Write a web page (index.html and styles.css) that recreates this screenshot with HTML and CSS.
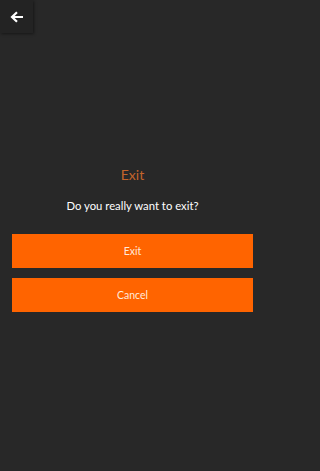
FILE: index.html
```html
<!DOCTYPE html>
<html>
<head>
<meta charset="utf-8">
<link rel="stylesheet" href="styles.css">
</head>
<body>
<div class="page">
  <div class="topbar">
    <button class="back" aria-label="Back">
      <svg width="14" height="12" viewBox="0 0 14 12"><path d="M13 6H2.5M7 1.2L2 6l5 4.8" fill="none" stroke="#fff" stroke-width="2.2"/></svg>
    </button>
  </div>
  <div class="dialog">
    <div class="title">Exit</div>
    <div class="question">Do you really want to exit?</div>
    <button class="btn">Exit</button>
    <button class="btn">Cancel</button>
  </div>
</div>
</body>
</html>
```
FILE: styles.css
```css
html, body {
  margin: 0;
  padding: 0;
  background: #282828;
}
body {
  font-family: "Lato", "Noto Sans", sans-serif;
  width: 265px;
  height: 471px;
  overflow: hidden;
}
.page {
  display: flex;
  flex-direction: column;
  height: 471px;
}
.topbar {
  height: 33px;
}
.back {
  width: 33px;
  height: 33px;
  border: none;
  padding: 0;
  background: #232323;
  box-shadow: 1px 1px 3px rgba(0,0,0,0.45);
  display: flex;
  align-items: center;
  justify-content: center;
}
.dialog {
  display: flex;
  flex-direction: column;
  align-items: stretch;
  padding: 0 12px;
  margin-top: 133px;
}
.title {
  text-align: center;
  color: #c4642b;
  font-size: 14px;
  font-weight: 400;
  line-height: 18px;
}
.question {
  text-align: center;
  color: #ffffff;
  font-size: 11.3px;
  line-height: 16px;
  margin-top: 14px;
}
.btn {
  height: 34px;
  border: none;
  background: #ff6400;
  color: #ffeadb;
  font-family: inherit;
  font-size: 10.5px;
  margin-top: 10px;
  padding: 0;
}
.question + .btn { margin-top: 20px; }
```
